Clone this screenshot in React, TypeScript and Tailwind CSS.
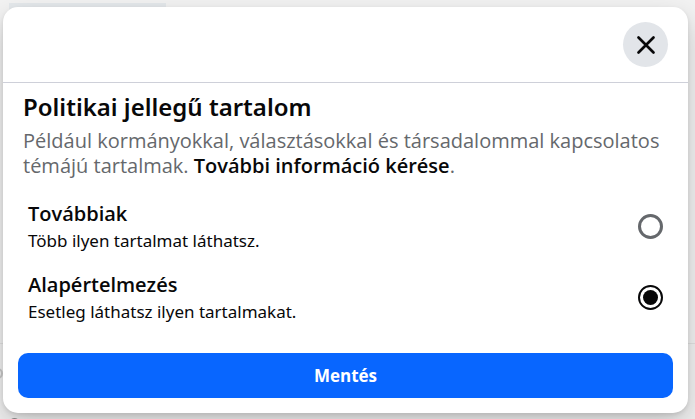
import { useState } from "react"

type Option = {
  id: string
  title: string
  description: string
}

const options: Option[] = [
  {
    id: "more",
    title: "Továbbiak",
    description: "Több ilyen tartalmat láthatsz.",
  },
  {
    id: "default",
    title: "Alapértelmezés",
    description: "Esetleg láthatsz ilyen tartalmakat.",
  },
]

type OptionRowProps = {
  option: Option
  checked: boolean
  onSelect: (id: string) => void
}

function OptionRow({ option, checked, onSelect }: OptionRowProps) {
  return (
    <label className="flex cursor-pointer items-center justify-between py-[9px]">
      <span className="flex flex-col">
        <span className="text-[20px] leading-7 font-semibold">
          {option.title}
        </span>
        <span className="font-['Noto_Sans',sans-serif] text-[17px] leading-[25px]">
          {option.description}
        </span>
      </span>
      <input
        type="radio"
        name="political-content"
        value={option.id}
        checked={checked}
        onChange={() => onSelect(option.id)}
        className="grid size-[25px] shrink-0 appearance-none place-items-center rounded-full border-3 border-[#65686c] before:size-[15px] before:rounded-full checked:border-2 checked:border-[#080809] checked:before:bg-[#080809]"
      />
    </label>
  )
}

// Slivers of the dimmed page that stay visible around the dialog
function Backdrop() {
  return (
    <div aria-hidden="true" className="absolute inset-0 -z-10">
      <div className="absolute top-[3px] left-[9px] h-3 w-[157px] bg-[#e4e8eb]" />
      <div className="absolute inset-x-0 top-[343px] h-px bg-[#e2e2e2]" />
      <div className="absolute top-[368px] -left-2 size-[11px] rounded-full border-2 border-[#c9c9c9]" />
      <div className="absolute top-[418px] left-[9px] size-[11px] rounded-full bg-[#8f8f8f]" />
    </div>
  )
}

export default function App() {
  const [selected, setSelected] = useState("default")

  return (
    <div className="relative isolate min-h-screen overflow-hidden bg-[#f2f2f2] pt-[7px] pr-[7px] pb-1.5 pl-[3px] font-['Open_Sans','Noto_Sans',sans-serif] text-[#080809]">
      <Backdrop />
      <div
        role="dialog"
        aria-labelledby="dialog-title"
        className="rounded-[15px] bg-white shadow-[0_12px_28px_rgba(0,0,0,0.2),0_2px_4px_rgba(0,0,0,0.1)]"
      >
        <header className="flex justify-end border-b border-[#ced0d9] px-5 py-[15px]">
          <button
            type="button"
            aria-label="Bezárás"
            className="flex size-[45px] items-center justify-center rounded-full bg-[#e2e5e9]"
          >
            <svg
              viewBox="0 0 24 24"
              className="size-6 stroke-[#080809]"
              strokeWidth="2.7"
              strokeLinecap="round"
            >
              <path d="M4.5 4.5l15 15M19.5 4.5l-15 15" />
            </svg>
          </button>
        </header>
        <div className="px-5 pt-2">
          <h2
            id="dialog-title"
            className="font-['Noto_Sans',sans-serif] text-[24px] leading-8 font-semibold"
          >
            Politikai jellegű tartalom
          </h2>
          <p className="pt-[5px] text-[20px] leading-[25px] text-[#65686c]">
            Például kormányokkal, választásokkal és társadalommal kapcsolatos
            témájú tartalmak.{" "}
            <a href="#" className="font-semibold text-[#080809]">
              További információ kérése
            </a>
            .
          </p>
        </div>
        <fieldset className="px-[25px] pt-[13px] pb-[5px]">
          {options.map((option) => (
            <OptionRow
              key={option.id}
              option={option}
              checked={option.id === selected}
              onSelect={setSelected}
            />
          ))}
        </fieldset>
        <footer className="p-[15px]">
          <button
            type="button"
            className="h-[45px] w-full rounded-[10px] bg-[#0866ff] text-[17px] font-bold text-white"
          >
            Mentés
          </button>
        </footer>
      </div>
    </div>
  )
}
